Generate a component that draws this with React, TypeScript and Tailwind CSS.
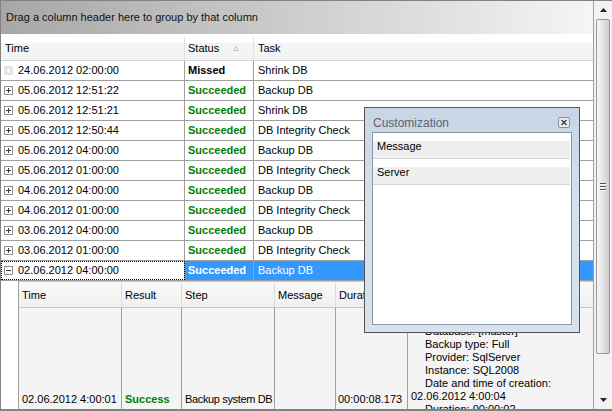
import React from 'react';

const rows: [string, string, string][] = [
  ['24.06.2012 02:00:00', 'Missed', 'Shrink DB'],
  ['05.06.2012 12:51:22', 'Succeeded', 'Backup DB'],
  ['05.06.2012 12:51:21', 'Succeeded', 'Shrink DB'],
  ['05.06.2012 12:50:44', 'Succeeded', 'DB Integrity Check'],
  ['05.06.2012 04:00:00', 'Succeeded', 'Backup DB'],
  ['05.06.2012 01:00:00', 'Succeeded', 'DB Integrity Check'],
  ['04.06.2012 04:00:00', 'Succeeded', 'Backup DB'],
  ['04.06.2012 01:00:00', 'Succeeded', 'DB Integrity Check'],
  ['03.06.2012 04:00:00', 'Succeeded', 'Backup DB'],
  ['03.06.2012 01:00:00', 'Succeeded', 'DB Integrity Check'],
  ['02.06.2012 04:00:00', 'Succeeded', 'Backup DB'],
];

const messageLines = [
  'Server: MSSQL-01',
  'Database: [master]',
  'Backup type: Full',
  'Provider: SqlServer',
  'Instance: SQL2008',
  'Date and time of creation:',
];

function Expander({ open, disabled }: { open?: boolean; disabled?: boolean }) {
  return (
    <svg width="9" height="9" viewBox="0 0 9 9" className="shrink-0">
      <rect x="0.5" y="0.5" width="8" height="8" fill={disabled ? '#e4e4e4' : '#fff'} stroke={disabled ? '#e4e4e4' : '#8e8e8e'} />
      <path d="M2 4.5h5" stroke={disabled ? '#fff' : '#3a3a3a'} />
      {!open && <path d="M4.5 2v5" stroke={disabled ? '#fff' : '#3a3a3a'} />}
    </svg>
  );
}

function GridRow({ row, index }: { row: [string, string, string]; index: number }) {
  const [time, status, task] = row;
  const selected = index === rows.length - 1;
  return (
    <div className="flex h-[20px] border-b border-[#a0a0a0]">
      <div className={`w-[184px] shrink-0 border-r border-[#a0a0a0] flex items-center gap-[5px] pl-[3px] ${selected ? 'outline-1 outline-dotted outline-black -outline-offset-1' : ''}`}>
        <Expander open={selected} disabled={index === 0} />
        <span>{time}</span>
      </div>
      <div className={`w-[69px] shrink-0 border-r border-[#a0a0a0] flex items-center pl-[3px] font-bold ${selected ? 'bg-[#3399ff] text-white' : status === 'Missed' ? 'text-black' : 'text-[#008000]'}`}>
        {status}
      </div>
      <div className={`flex-1 flex items-center pl-[4px] ${selected ? 'bg-[#3399ff] text-white' : ''}`}>
        {task}
      </div>
    </div>
  );
}

function DetailSection() {
  return (
    <div className="flex flex-1 min-h-0">
      <div className="w-[17px] shrink-0 bg-white" />
      <div className="flex-1 flex flex-col border-l border-[#a0a0a0] min-h-0">
        {/* detail header */}
        <div className="flex h-[27px] shrink-0 border-t border-b border-[#c8c8c8] bg-[linear-gradient(#f9f9f9,#f0f0f0)] pt-[1px]">
          <div className="w-[103px] border-r border-[#dadada] flex items-center pl-[3px]">Time</div>
          <div className="w-[60px] border-r border-[#dadada] flex items-center pl-[3px]">Result</div>
          <div className="w-[93px] border-r border-[#dadada] flex items-center pl-[3px]">Step</div>
          <div className="w-[61px] border-r border-[#dadada] flex items-center pl-[3px]">Message</div>
          <div className="w-[72px] border-r border-[#dadada] flex items-center pl-[3px] overflow-hidden">Duration</div>
          <div className="flex-1 flex items-center pl-[3px]">Details</div>
        </div>
        {/* detail row */}
        <div className="flex flex-1 min-h-0 bg-[#f4f4f4] overflow-hidden">
          <div className="w-[103px] shrink-0 border-r border-[#a0a0a0] flex items-end pl-[3px] pb-[2px]">02.06.2012 4:00:01</div>
          <div className="w-[60px] shrink-0 border-r border-[#a0a0a0] flex items-end pl-[3px] pb-[2px] font-bold text-[#008000]">Success</div>
          <div className="w-[93px] shrink-0 border-r border-[#a0a0a0] flex items-end pl-[3px] pb-[2px] tracking-[-0.35px]">Backup system DB</div>
          <div className="w-[61px] shrink-0 border-r border-[#a0a0a0]" />
          <div className="w-[72px] shrink-0 border-r border-[#a0a0a0] flex items-end pl-[2px] pb-[2px]">00:00:08.173</div>
          <div className="flex-1 flex flex-col justify-end pl-[3px] overflow-hidden">
            <div className="flex flex-col leading-[13px] mb-[-7px]">
              {messageLines.map((l) => (
                <span key={l} className="pl-[14px]">{l}</span>
              ))}
              <span>02.06.2012 4:00:04</span>
              <span className="pl-[14px]">Duration: 00:00:02</span>
            </div>
          </div>
        </div>
      </div>
    </div>
  );
}

function ScrollBar() {
  return (
    <div className="w-[18px] shrink-0 flex flex-col bg-[#f2f2f2]">
      <div className="h-[18px] flex items-center justify-center">
        <svg width="7" height="4" viewBox="0 0 7 4"><path d="M0 4L3.5 0L7 4Z" fill="#222" /></svg>
      </div>
      <div className="h-[335px] mx-[2px] rounded-[2px] border border-[#979797] bg-linear-to-r from-[#f6f6f6] via-[#e4e4e4] to-[#cdcdcd] flex flex-col items-center justify-center gap-[1px]">
        {[0, 1, 2].map((i) => (
          <div key={i} className="w-[6px] h-[2px] border-t border-[#555] border-b border-b-[#fafafa]" />
        ))}
      </div>
      <div className="flex-1" />
      <div className="h-[18px] flex items-center justify-center">
        <svg width="7" height="4" viewBox="0 0 7 4"><path d="M0 0L3.5 4L7 0Z" fill="#222" /></svg>
      </div>
    </div>
  );
}

function Customization() {
  return (
    <div className="absolute left-[363px] top-[106px] w-[216px] h-[226px] border border-[#555] bg-linear-to-b from-[#c7d5e5] via-[#d7e2ee] to-[#d7e2ee] flex flex-col px-[7px] pb-[7px]">
      <div className="h-[24px] shrink-0 flex items-center justify-between pt-[5px] pl-[1px] pr-[2px]">
        <span className="text-[12px] text-[#59636f]">Customization</span>
        <svg width="12" height="11" viewBox="0 0 12 11">
          <rect x="0.5" y="0.5" width="11" height="10" rx="1.5" fill="#e9eef5" stroke="#8090a6" />
          <path d="M3.5 3L8.5 8M8.5 3L3.5 8" stroke="#3a3a3a" strokeWidth="1.4" />
        </svg>
      </div>
      <div className="flex-1 bg-white border border-[#8b97a6] flex flex-col">
        {['Message', 'Server'].map((item) => (
          <div key={item} className="h-[26px] border-b border-[#d6d6d6] mr-[1px] bg-[linear-gradient(#fff_0_34%,#efefef_34%)] flex items-center pl-[4px] pt-[2px]">
            {item}
          </div>
        ))}
      </div>
    </div>
  );
}

export default function App() {
  return (
    <div className="relative w-[612px] h-[411px] overflow-hidden bg-white border-t border-l border-b-2 border-[#828282] flex font-['Liberation_Sans',Arial,sans-serif] text-[11px] text-black whitespace-nowrap">
      <div className="w-[593px] shrink-0 flex flex-col border-r border-[#a0a0a0]">
        {/* Group panel */}
        <div className="h-[33px] shrink-0 bg-linear-to-r from-[#a7a7a7] to-[#f5f5f5] flex items-center pl-[5px] text-[#111]">
          Drag a column header here to group by that column
        </div>
        {/* Column headers */}
        <div className="h-[27px] shrink-0 flex border-b border-[#d2d2d2] bg-[linear-gradient(#fff_0_34%,#f3f4f6_34%)] pt-[2px]">
          <div className="w-[184px] border-r border-[#e2e2e2] flex items-center pl-[4px]">Time</div>
          <div className="w-[69px] border-r border-[#e2e2e2] flex items-center pl-[3px] gap-[14px]">
            <span>Status</span>
            <svg width="6" height="5" viewBox="0 0 6 5"><path d="M0.5 4.5L3 0.5L5.5 4.5Z" fill="#f4f4f4" stroke="#c4c4c4" /></svg>
          </div>
          <div className="flex-1 flex items-center pl-[4px]">Task</div>
        </div>
        {/* Rows */}
        {rows.map((r, i) => (
          <GridRow key={i} row={r} index={i} />
        ))}
        <DetailSection />
      </div>
      <ScrollBar />
      <Customization />
    </div>
  );
}
